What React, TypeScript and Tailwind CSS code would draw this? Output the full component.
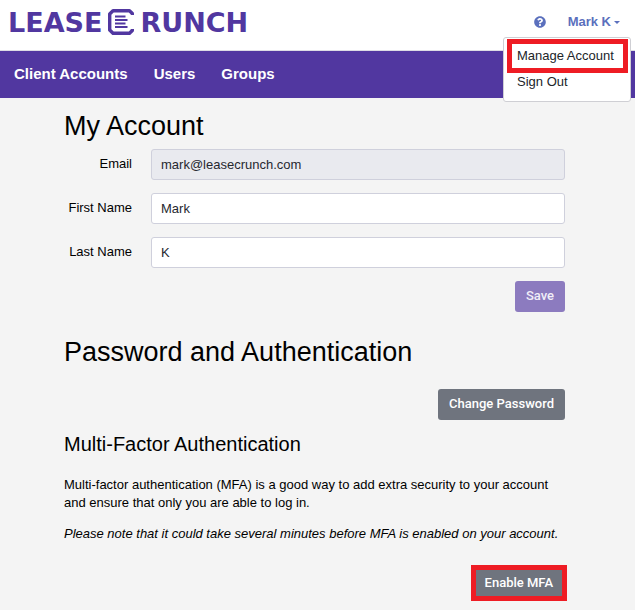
import { useState } from "react";
import type { ReactNode } from "react";

interface TextFieldProps {
  id: string;
  label: string;
  value: string;
  type?: string;
  readOnly?: boolean;
  onChange?: (value: string) => void;
}

function TextField({
  id,
  label,
  value,
  type = "text",
  readOnly = false,
  onChange,
}: TextFieldProps) {
  return (
    <div className="flex gap-[19px]">
      <label htmlFor={id} className="w-[68px] shrink-0 pt-1.5 text-right leading-[18px]">
        {label}
      </label>
      <input
        id={id}
        type={type}
        value={value}
        readOnly={readOnly}
        onChange={(e) => onChange?.(e.target.value)}
        className="h-[31px] min-w-0 flex-1 rounded-[3px] border border-[#cfd0dc] bg-white px-[9px] text-[#26282f] read-only:bg-[#e9eaef]"
      />
    </div>
  );
}

function Button({ children, className }: { children: ReactNode; className: string }) {
  return (
    <button
      type="button"
      className={`h-[31px] rounded-[3px] px-[11px] pb-0.5 font-['Roboto','Liberation_Sans',sans-serif] text-[13px] font-medium ${className}`}
    >
      {children}
    </button>
  );
}

function Logo() {
  return (
    <a
      href="#"
      aria-label="LeaseCrunch"
      className="flex items-center gap-1.5 font-['DejaVu_Sans',sans-serif] text-[27px] leading-none font-bold text-[#5137a0]"
    >
      <span>LEASE</span>
      {/* The C doubles as a sheet of paper */}
      <svg width="26" height="26" viewBox="0 0 26 26" fill="none" stroke="currentColor" aria-hidden="true">
        <path d="M24.300 6V4.500L21.500 1.700H5L1.700 5V21L5 24.300H21.500L24.300 21.500V20" strokeWidth="3.4" strokeLinejoin="round" />
        <path d="M7 7.500H17.500M7 11H19.500M7 14.500H17.500M7 18H19.500" strokeWidth="2" />
      </svg>
      <span>RUNCH</span>
    </a>
  );
}

function AccountMenu() {
  return (
    <div className="relative flex items-center gap-[22px] text-[#5b70bd]">
      <a href="#" aria-label="Help">
        <svg width="12" height="12" viewBox="0 0 512 512" fill="currentColor" aria-hidden="true">
          <path d="M504 256c0 137-111 248-248 248S8 393 8 256 119 8 256 8s248 111 248 248zM262.700 90c-54.500 0-89.300 23-116.500 63.800-3.500 5.300-2.400 12.400 2.700 16.300l34.700 26.300c5.200 3.900 12.600 3 16.700-2.100 17.900-22.700 30.100-35.800 57.300-35.800 20.400 0 45.700 13.100 45.700 33 0 15-12.400 22.700-32.500 34C247.100 238.500 216 255 216 296v4c0 6.600 5.400 12 12 12h56c6.600 0 12-5.400 12-12v-1.300c0-28.800 84.200-30 84.200-108C380.200 132 319.400 90 262.700 90zM256 338c-25.400 0-46 20.600-46 46s20.600 46 46 46 46-20.600 46-46-20.600-46-46-46z" />
        </svg>
      </a>
      <button type="button" aria-expanded="true" className="flex items-center gap-[3px] text-[13px] leading-5 font-bold">
        Mark K
        <svg width="6" height="3" viewBox="0 0 6 3" fill="currentColor" aria-hidden="true">
          <path d="M0 0h6L3 3z" />
        </svg>
      </button>
      <div className="absolute top-full -right-[11px] mt-[5px] flex w-32 flex-col rounded-[3px] border border-[#cfcfd4] bg-white px-[3px] pt-px pb-2.5 text-[#212529]">
        <a href="#" className="-mr-px border-5 border-[#ee1c24] px-[5px] py-[3px] leading-[18px] whitespace-nowrap">
          Manage Account
        </a>
        <a href="#" className="px-2.5 leading-[18px]">
          Sign Out
        </a>
      </div>
    </div>
  );
}

export default function App() {
  const [firstName, setFirstName] = useState("Mark");
  const [lastName, setLastName] = useState("K");

  return (
    <div className="min-h-screen bg-[#f4f4f4] font-['Liberation_Sans',Arial,sans-serif] text-[13px] text-black">
      <header className="flex h-[51px] items-center justify-between border-b border-[#dcdce4] bg-white pr-[15px] pb-1.5 pl-2">
        <Logo />
        <AccountMenu />
      </header>

      <nav className="flex gap-[26px] bg-[#5137a0] px-3.5 pt-[11px] pb-3 text-[15px] leading-6 font-bold text-white">
        <a href="#">Client Accounts</a>
        <a href="#">Users</a>
        <a href="#">Groups</a>
      </nav>

      <main className="pt-3 pr-[70px] pb-2 pl-16">
        <h1 className="text-[27px] leading-8">My Account</h1>
        <form className="mt-[7px] flex flex-col gap-[13px]">
          <TextField id="email" label="Email" type="email" value="mark@leasecrunch.com" readOnly />
          <TextField id="first-name" label="First Name" value={firstName} onChange={setFirstName} />
          <TextField id="last-name" label="Last Name" value={lastName} onChange={setLastName} />
          <Button className="self-end bg-[#8c7bbf] text-[#f1eef8]">Save</Button>
        </form>

        <h2 className="mt-6 text-[27px] leading-8">Password and Authentication</h2>
        <div className="mt-[21px] flex justify-end">
          <Button className="bg-[#6f747e] text-white">Change Password</Button>
        </div>

        <h3 className="mt-3 text-xl leading-6">Multi-Factor Authentication</h3>
        <p className="mt-5 leading-[18px]">
          Multi-factor authentication (MFA) is a good way to add extra security to your account and
          ensure that only you are able to log in.
        </p>
        <p className="mt-[13px] leading-[18px] italic">
          Please note that it could take several minutes before MFA is enabled on your account.
        </p>
        <div className="-mr-0.5 mt-[22px] flex justify-end">
          <button
            type="button"
            className="h-9 border-5 border-[#ee1c24] bg-[#6f747e] px-[9px] font-['Roboto','Liberation_Sans',sans-serif] text-[13px] font-medium text-white"
          >
            Enable MFA
          </button>
        </div>
      </main>
    </div>
  );
}
